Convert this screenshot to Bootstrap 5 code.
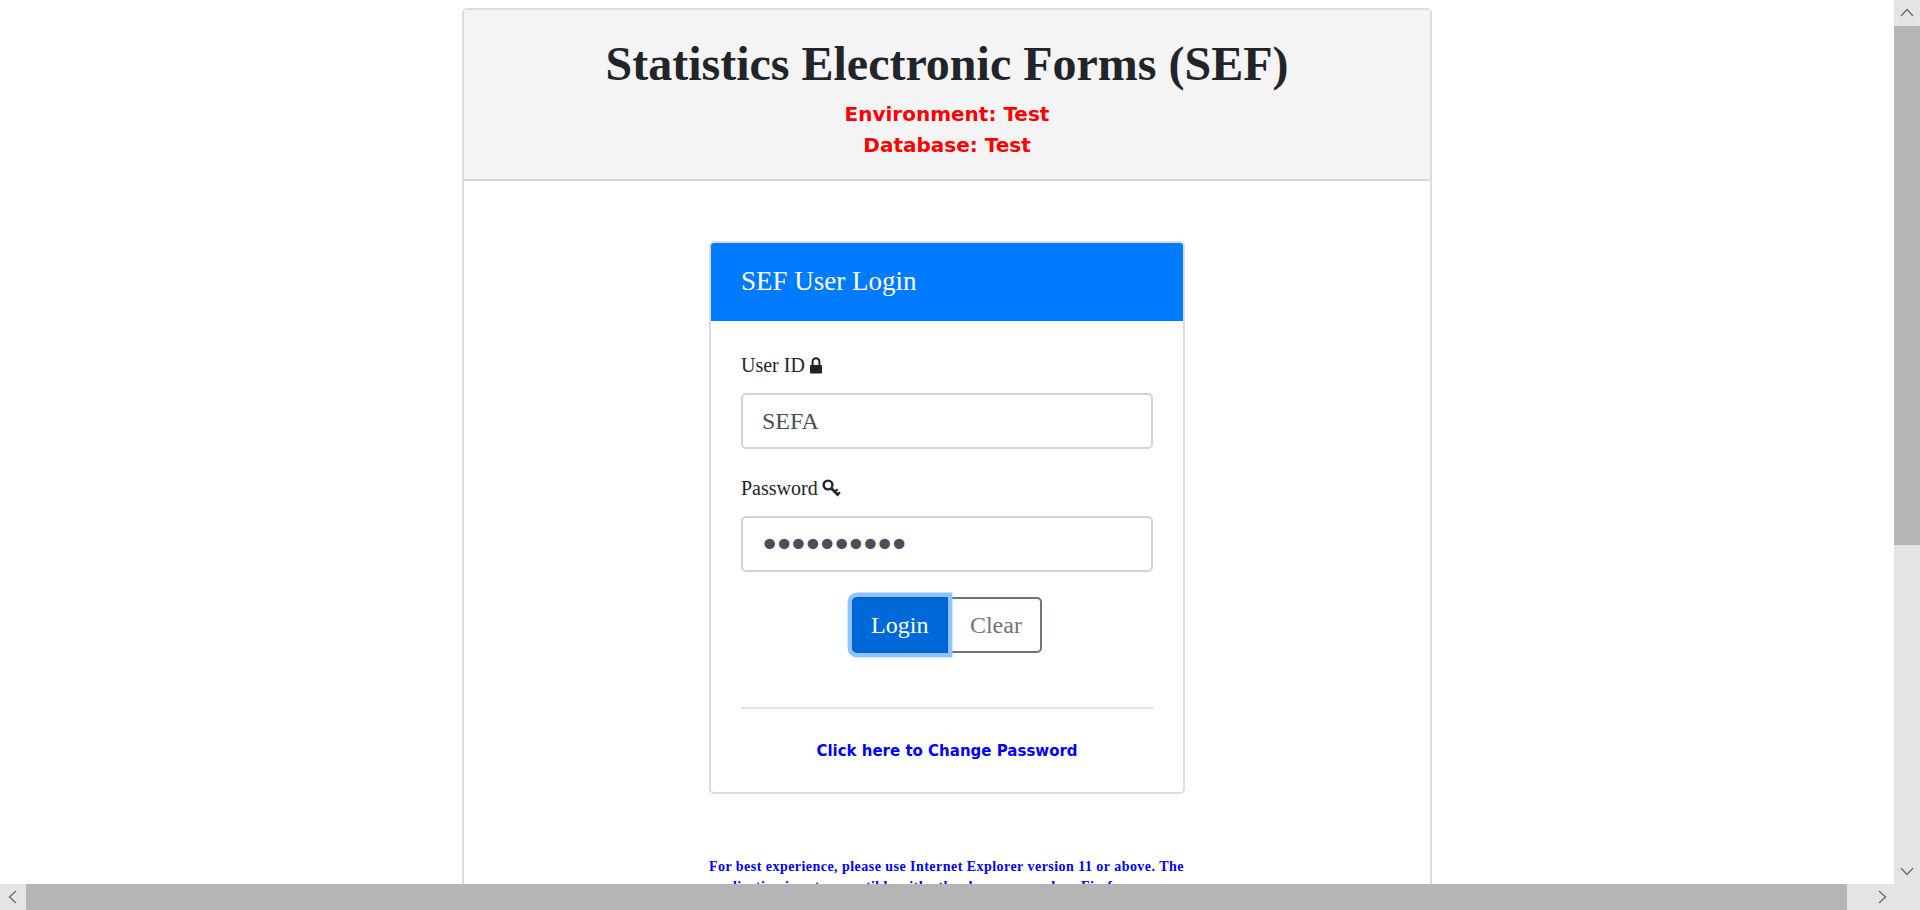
<!DOCTYPE html>
<html lang="en">
  <head>
    <meta charset="UTF-8" />
    <meta name="viewport" content="width=device-width, initial-scale=1.0" />
    <title>SEF User Login</title>
    <link href="https://cdn.jsdelivr.net/npm/bootstrap@5.3.0/dist/css/bootstrap.min.css" rel="stylesheet" />
    <style>
      html, body { height: 100%; overflow: hidden; }
      body { font-family: "Liberation Serif", "Times New Roman", serif; background: #fff; color: #212529; }
      .page-area { width: 1894px; height: 884px; overflow: hidden; padding-top: 8px; }
      .frame-card { width: 970px; margin: 0 auto; border: 2px solid #dcdcdc; border-radius: 5px; }
      .frame-head { background: #f4f4f4; border-bottom: 2px solid #d8d8d8; height: 171px; padding-top: 25px; text-align: center; }
      .frame-head h1 { font-family: "Liberation Serif", serif; font-weight: 700; font-size: 48px; line-height: 58px; margin: 0 0 6px; }
      .env-line { font-family: "DejaVu Sans", Verdana, sans-serif; font-weight: 700; font-size: 20px; line-height: 31px; color: #f00; }
      .frame-body { padding-top: 60px; }
      .login-card { width: 476px; margin: 0 auto; border: 2px solid #dcdcdc; border-radius: 5px; }
      .login-head { background: #007bff; color: #fff; font-size: 27px; line-height: 32px; height: 78px; padding: 22px 30px; border-radius: 3px 3px 0 0; }
      .login-body { padding: 32px 30px 0; height: 471px; }
      .field-label { font-size: 20px; line-height: 24px; margin-bottom: 16px; display: flex; align-items: center; gap: 4px; }
      .field-input { height: 56px; border: 2px solid #ced4da; border-radius: 5px; font-family: "Liberation Serif", serif; font-size: 24px; color: #495057; padding: 0 19px; margin-bottom: 27px; }
      .pw-input { font-family: "DejaVu Sans", sans-serif; font-size: 36px; letter-spacing: -6.85px; padding-left: 16px; }
      .button-row { margin-top: -2px; }
      .btn-big { font-size: 24px; line-height: 29px; padding: 11.5px 17px; border-width: 2px; border-radius: 5px; font-family: "Liberation Serif", serif; }
      .btn-login { background: #0069d9; border-color: #0062cc; color: #fff; padding: 11.5px 18px 11.5px 17px; box-shadow: 0 0 0 4.4px #8dc4ff; position: relative; z-index: 2; }
      .btn-clear { color: #6c757d; border-color: #6c757d; padding: 11.5px 18px 11.5px 20.5px; }
      .login-rule { border: 0; border-top: 2px solid #e3e3e3; opacity: 1; margin: 54px 0 32px; }
      .change-link { font-family: "DejaVu Sans", Verdana, sans-serif; font-weight: 700; font-size: 15px; line-height: 20px; color: #00f; text-decoration: none; display: block; text-align: center; }
      .browser-note { width: 476px; margin: 63px auto 0; font-weight: 700; font-size: 14px; line-height: 20px; color: #00f; letter-spacing: .46px; }
      .sbar { position: fixed; background: #e4e4e4; }
      .sbar-v { top: 0; right: 0; width: 26px; height: 910px; }
      .sbar-h { left: 0; bottom: 0; width: 1894px; height: 26px; }
      .sbar-thumb { position: absolute; background: #b5b5b5; }
      .sbar-v .sbar-thumb { top: 26px; left: 0; width: 26px; height: 519px; }
      .sbar-h .sbar-thumb { top: 0; left: 26px; width: 1821px; height: 26px; }
      .sbar-arrow { position: absolute; fill: none; stroke: #6a6a6a; stroke-width: 1.3; }
    </style>
  </head>
  <body>
    <div class="page-area">
      <div class="frame-card">
        <div class="frame-head">
          <h1>Statistics Electronic Forms (SEF)</h1>
          <div class="env-line">Environment: Test</div>
          <div class="env-line">Database: Test</div>
        </div>
        <div class="frame-body">
          <div class="login-card">
            <div class="login-head">SEF User Login</div>
            <div class="login-body">
              <form>
                <label class="field-label" for="userId">User ID
                  <svg width="14" height="17" viewBox="0 0 14 17"><path fill="#212529" d="M2.6 8V4.8C2.6 2 4.4.3 7 .3s4.4 1.7 4.4 4.5V8h.5c.7 0 1.1.4 1.1 1.1v6.3c0 .7-.4 1.2-1.1 1.2H2.1c-.7 0-1.1-.5-1.1-1.2V9.1C1 8.4 1.4 8 2.1 8zm2 0h4.8V4.8C9.4 3.2 8.4 2.2 7 2.2s-2.4 1-2.4 2.6z"/></svg>
                </label>
                <input class="form-control field-input" id="userId" type="text" value="SEFA" />
                <label class="field-label" for="userPw">Password
                  <svg width="19" height="19" viewBox="0 0 19 19"><g fill="none" stroke="#212529"><circle cx="6" cy="6" r="4.4" stroke-width="2.4"/><path stroke-width="2.8" d="M9 9l7.6 7.6"/><path stroke-width="2" d="M13 12.2l2.8-1.8M15.6 15l2.6-1.6"/></g></svg>
                </label>
                <input class="form-control field-input pw-input" id="userPw" type="password" value="password12" />
                <div class="button-row d-flex justify-content-center">
                  <div class="btn-group" role="group">
                    <button type="button" class="btn btn-big btn-login">Login</button>
                    <button type="button" class="btn btn-big btn-clear">Clear</button>
                  </div>
                </div>
              </form>
              <hr class="login-rule" />
              <a class="change-link" href="#">Click here to Change Password</a>
            </div>
          </div>
          <div class="browser-note">For best experience, please use Internet Explorer version 11 or above. The application is not compatible with other browsers such as Firefox.</div>
        </div>
      </div>
    </div>

    <!-- scrollbars of the window -->
    <div class="sbar sbar-v">
      <div class="sbar-thumb"></div>
      <svg class="sbar-arrow" style="left:6px;top:8px" width="14" height="10" viewBox="0 0 14 10"><path d="M1 8l6-6.5L13 8"/></svg>
      <svg class="sbar-arrow" style="left:6px;top:866px" width="14" height="10" viewBox="0 0 14 10"><path d="M1 2l6 6.5L13 2"/></svg>
    </div>
    <div class="sbar sbar-h">
      <div class="sbar-thumb"></div>
      <svg class="sbar-arrow" style="left:8px;top:6px" width="10" height="14" viewBox="0 0 10 14"><path d="M8 1L1.5 7 8 13"/></svg>
      <svg class="sbar-arrow" style="left:1877px;top:6px" width="10" height="14" viewBox="0 0 10 14"><path d="M2 1l6.5 6L2 13"/></svg>
    </div>

    <script src="https://cdn.jsdelivr.net/npm/bootstrap@5.3.0/dist/js/bootstrap.bundle.min.js"></script>
  </body>
</html>
